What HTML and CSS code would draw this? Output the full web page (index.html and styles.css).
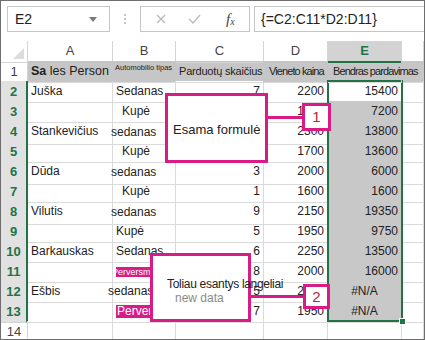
FILE: index.html
```html
<!DOCTYPE html>
<html lang="lt">
<head>
    <meta charset="UTF-8">
    <title>Masyvo formulė</title>
    <link rel="stylesheet" href="styles.css">
</head>
<body>
    <div class="window">
        <!-- Formula bar -->
        <div class="formula-bar">
            <div class="name-box">
                <span>E2</span>
                <svg class="drop" width="8" height="5" viewBox="0 0 8 5"><path d="M0 0 H8 L4 5 Z" fill="#7a7a7a"/></svg>
            </div>
            <svg class="dots" width="3" height="11" viewBox="0 0 3 11">
                <rect x="1" y="0" width="2" height="2" fill="#c4c4c4"/>
                <rect x="1" y="4" width="2" height="2" fill="#c4c4c4"/>
                <rect x="1" y="8" width="2" height="2" fill="#c4c4c4"/>
            </svg>
            <div class="fx-buttons">
                <svg width="10" height="10" viewBox="0 0 10 10"><path d="M1 1 L9 9 M9 1 L1 9" stroke="#b9b9b9" stroke-width="1.3"/></svg>
                <svg width="13" height="10" viewBox="0 0 13 10"><path d="M1 5 L5 9 L12 1" stroke="#b9b9b9" stroke-width="1.3" fill="none"/></svg>
                <span class="fx">f<sub>x</sub></span>
            </div>
            <div class="formula">{=C2:C11*D2:D11}</div>
        </div>

        <!-- Sheet -->
        <div class="sheet">
            <div class="row head">
                <div class="corner"><svg width="11" height="11" viewBox="0 0 11 11"><path d="M11 0 V11 H0 Z" fill="#dcdcdc"/></svg></div>
                <div class="col">A</div>
                <div class="col">B</div>
                <div class="col">C</div>
                <div class="col">D</div>
                <div class="col sel">E</div>
                <div class="col"></div>
            </div>
            <div class="row titles">
                <div class="rn">1</div>
                <div class="cell big"><b>Sa</b> les Person</div>
                <div class="cell tiny">Automobilio tipas</div>
                <div class="cell over count">Parduotų skaičius</div>
                <div class="cell narrow">Vieneto kaina</div>
                <div class="cell narrow over">Bendras pardavimas</div>
                <div class="cell"></div>
            </div>
            <div class="row">
                <div class="rn on">2</div>
                <div class="cell">Juška</div>
                <div class="cell">Sedanas</div>
                <div class="cell num">7</div>
                <div class="cell num">2200</div>
                <div class="cell num active">15400</div>
                <div class="cell"></div>
            </div>
            <div class="row">
                <div class="rn on">3</div>
                <div class="cell"></div>
                <div class="cell kupe">Kupė</div>
                <div class="cell num">4</div>
                <div class="cell num">1800</div>
                <div class="cell num grey">7200</div>
                <div class="cell"></div>
            </div>
            <div class="row">
                <div class="rn on">4</div>
                <div class="cell">Stankevičius</div>
                <div class="cell low">sedanas</div>
                <div class="cell num">6</div>
                <div class="cell num">2300</div>
                <div class="cell num grey">13800</div>
                <div class="cell"></div>
            </div>
            <div class="row">
                <div class="rn on">5</div>
                <div class="cell"></div>
                <div class="cell kupe">Kupė</div>
                <div class="cell num">8</div>
                <div class="cell num">1700</div>
                <div class="cell num grey">13600</div>
                <div class="cell"></div>
            </div>
            <div class="row">
                <div class="rn on">6</div>
                <div class="cell">Dūda</div>
                <div class="cell low">sedanas</div>
                <div class="cell num">3</div>
                <div class="cell num">2000</div>
                <div class="cell num grey">6000</div>
                <div class="cell"></div>
            </div>
            <div class="row">
                <div class="rn on">7</div>
                <div class="cell"></div>
                <div class="cell kupe">Kupė</div>
                <div class="cell num">1</div>
                <div class="cell num">1600</div>
                <div class="cell num grey">1600</div>
                <div class="cell"></div>
            </div>
            <div class="row">
                <div class="rn on">8</div>
                <div class="cell">Vilutis</div>
                <div class="cell low">sedanas</div>
                <div class="cell num">9</div>
                <div class="cell num">2150</div>
                <div class="cell num grey">19350</div>
                <div class="cell"></div>
            </div>
            <div class="row">
                <div class="rn on">9</div>
                <div class="cell"></div>
                <div class="cell kupe2">Kupė</div>
                <div class="cell num">5</div>
                <div class="cell num">1950</div>
                <div class="cell num grey">9750</div>
                <div class="cell"></div>
            </div>
            <div class="row">
                <div class="rn on">10</div>
                <div class="cell">Barkauskas</div>
                <div class="cell kupe2">Sedanas</div>
                <div class="cell num">6</div>
                <div class="cell num">2250</div>
                <div class="cell num grey">13500</div>
                <div class="cell"></div>
            </div>
            <div class="row">
                <div class="rn on">11</div>
                <div class="cell"></div>
                <div class="cell"><span class="tag small"><span>Perversmo</span></span></div>
                <div class="cell num">8</div>
                <div class="cell num">2000</div>
                <div class="cell num grey">16000</div>
                <div class="cell"></div>
            </div>
            <div class="row">
                <div class="rn on">12</div>
                <div class="cell">Ešbis</div>
                <div class="cell wide">sedanas</div>
                <div class="cell num">5</div>
                <div class="cell num">2000</div>
                <div class="cell err grey">#N/A</div>
                <div class="cell"></div>
            </div>
            <div class="row">
                <div class="rn on">13</div>
                <div class="cell"></div>
                <div class="cell"><span class="tag">Perversmo</span></div>
                <div class="cell num">7</div>
                <div class="cell num">1950</div>
                <div class="cell err grey">#N/A</div>
                <div class="cell"></div>
            </div>
            <div class="row">
                <div class="rn">14</div>
                <div class="cell"></div>
                <div class="cell"></div>
                <div class="cell"></div>
                <div class="cell"></div>
                <div class="cell"></div>
                <div class="cell"></div>
            </div>

            <!-- Selection E2:E13 -->
            <div class="selection"><span class="handle"></span></div>

            <!-- Callouts -->
            <div class="line line-1"></div>
            <div class="line line-2"></div>
            <div class="box box-1">Esama formulė</div>
            <div class="box box-2">
                <span class="main">Toliau esantys langeliai</span>
                <span class="sub">new data</span>
            </div>
            <div class="badge badge-1">1</div>
            <div class="badge badge-2">2</div>
        </div>
    </div>
</body>
</html>
```

FILE: styles.css
```css
/* General */
body {
    margin: 0;
    background: #fff;
    font-family: 'Liberation Sans', Arial, sans-serif;
    color: #222;
    overflow: hidden;
}
.window {
    width: 425px;
    height: 340px;
    box-sizing: border-box;
    border: 1px solid #6e6e6e;
    overflow: hidden;
    background: #fff;
}

/* Formula bar */
.formula-bar {
    height: 40px;
    display: flex;
    align-items: flex-start;
    padding: 5px 0 0 6px;
    box-sizing: border-box;
}
.name-box {
    width: 103px;
    height: 26px;
    box-sizing: border-box;
    border: 1px solid #c6c6c6;
    display: flex;
    align-items: center;
    justify-content: space-between;
    padding: 0 12px 0 7px;
    font-size: 14px;
    color: #222;
}
.dots {
    margin: 8px 14px 0 13px;
}
.fx-buttons {
    width: 110px;
    height: 26px;
    box-sizing: border-box;
    border: 1px solid #c6c6c6;
    display: flex;
    align-items: center;
    gap: 22px;
    padding-left: 15px;
}
.fx {
    font-family: 'Liberation Serif', serif;
    font-style: italic;
    font-size: 15px;
    color: #444;
    margin-left: 3px;
}
.fx sub {
    font-size: 10px;
    vertical-align: -1px;
}
.formula {
    flex: 1;
    height: 26px;
    margin-left: 4px;
    margin-right: -4px;
    box-sizing: border-box;
    border: 1px solid #c6c6c6;
    padding: 0 6px;
    line-height: 24px;
    font-size: 14px;
    color: #222;
}

/* Sheet grid */
.sheet {
    position: relative;
}
.row {
    display: grid;
    grid-template-columns: 27px 85px 63px 88px 64px 74px 1fr;
    height: 20px;
}
.row > div {
    box-sizing: border-box;
    border-right: 1px solid #dadada;
    border-bottom: 1px solid #dadada;
    white-space: nowrap;
    font-size: 12px;
    line-height: 21px;
    padding: 0 3px;
}
.head > div {
    border-color: #d4d4d4;
    color: #444;
    text-align: center;
    line-height: 20px;
    font-size: 13px;
}
.corner {
    display: flex;
    align-items: flex-end;
    justify-content: flex-end;
    padding: 0 3px 3px 0 !important;
}
.col.sel {
    background: #d3d3d3;
    border-bottom: 2px solid #217346;
    color: #217346;
    font-weight: bold;
}
.row > .rn {
    text-align: center;
    color: #444;
    font-size: 13px;
    padding: 0;
    border-color: #d4d4d4;
}
.row > .rn.on {
    background: #e1e1e1;
    color: #217346;
    font-weight: bold;
    border-right: 2px solid #217346;
}
.num {
    text-align: right;
}
.err {
    text-align: center;
}
.grey {
    background: #c8c8c8;
}
.active {
    background: #fff;
}

/* Title row */
.titles {
    background: linear-gradient(to right, #fff 27px, #c6c6c6 27px);
}
.titles .cell {
    background: #c6c6c6;
    border-right-color: #c6c6c6;
    color: #222;
    font-size: 11.5px;
}
.titles .over {
    position: relative;
    z-index: 1;
    background: transparent;
}
.titles .count {
    font-size: 11px;
    letter-spacing: -0.2px;
}
.titles .big {
    font-size: 12.5px;
}
.titles .tiny {
    font-size: 7.5px;
    line-height: 14px;
    padding-left: 2px;
}
.titles .narrow {
    font-size: 11px;
    letter-spacing: -0.9px;
    padding-left: 5px;
}

/* Car type column nudges */
.row > .kupe {
    padding-left: 9px;
}
.low {
    text-indent: -5px;
    line-height: 23px !important;
}
.wide {
    text-indent: -8px;
}
.tag {
    display: inline-block;
    background: #d81b85;
    color: #fff;
    font-size: 12px;
    line-height: 13px;
    padding: 0 1px;
    vertical-align: middle;
}
.tag.small {
    font-size: 9px;
    line-height: 10px;
    width: 34px;
    overflow: hidden;
    padding: 0;
}
.tag.small span {
    margin-left: -4px;
}

/* Selection */
.selection {
    position: absolute;
    left: 326px;
    top: 39px;
    width: 76px;
    height: 242px;
    box-sizing: border-box;
    border: 2px solid #217346;
}
.handle {
    position: absolute;
    right: -5px;
    bottom: -5px;
    width: 5px;
    height: 5px;
    background: #217346;
    border: 1px solid #fff;
}

/* Callouts */
.box {
    position: absolute;
    background: #fff;
    border: 3px solid #d81b85;
    box-sizing: border-box;
    font-size: 13px;
    color: #222;
    white-space: nowrap;
}
.box-1 {
    left: 164px;
    top: 52px;
    width: 103px;
    height: 70px;
    display: flex;
    align-items: center;
    padding: 2px 0 0 5px;
}
.box-2 {
    left: 149px;
    top: 212px;
    width: 101px;
    height: 69px;
    padding: 21px 0 0 14px;
    display: flex;
    flex-direction: column;
    font-size: 12px;
}
.box-2 .main {
    line-height: 14px;
    letter-spacing: -0.3px;
}
.box-2 .sub {
    color: #8a8a8a;
    padding-left: 8px;
    line-height: 15px;
}
.line {
    position: absolute;
    height: 3px;
    background: #d81b85;
}
.line-1 {
    left: 266px;
    top: 75px;
    width: 36px;
}
.line-2 {
    left: 249px;
    top: 254px;
    width: 54px;
}
.badge {
    position: absolute;
    background: #fff;
    border: 3px solid #d81b85;
    box-sizing: border-box;
    color: #b5282e;
    font-size: 15px;
    text-align: center;
}
.badge-1 {
    left: 301px;
    top: 62px;
    width: 29px;
    height: 28px;
    line-height: 22px;
}
.badge-2 {
    left: 302px;
    top: 243px;
    width: 27px;
    height: 25px;
    line-height: 19px;
}
```
